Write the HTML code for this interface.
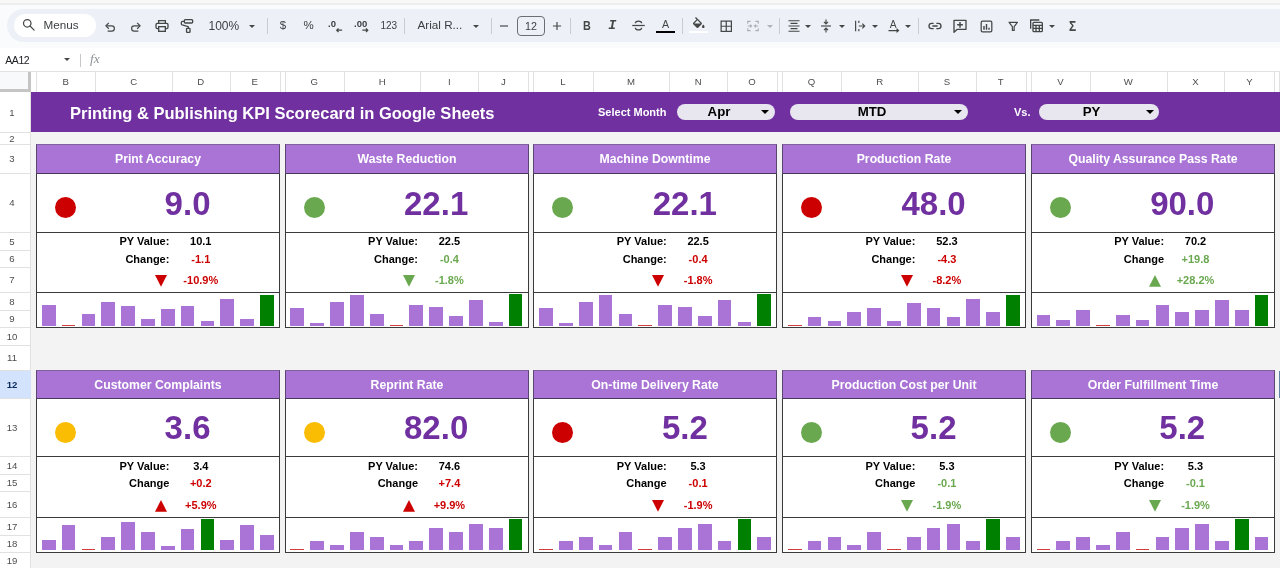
<!DOCTYPE html><html lang="en"><head><meta charset="utf-8"><title>Printing &amp; Publishing KPI Scorecard</title><style>
*{box-sizing:border-box}
html,body{margin:0;padding:0}
body{width:1280px;height:568px;overflow:hidden;position:relative;will-change:transform;background:#f3f3f3;font-family:"Liberation Sans",sans-serif;color:#000}
.a{position:absolute}
.tb{position:absolute;left:0;top:0;width:1280px;height:48px;background:#f9fbfd}
.strip{position:absolute;left:0;top:0;width:1280px;height:5px;background:#f8f8f6;border-bottom:2px solid #eeeeee}
.pill{position:absolute;left:7px;top:9px;width:1290px;height:33px;border-radius:16.5px;background:#edf1f7}
.menus{position:absolute;left:14px;top:14px;width:82px;height:23px;border-radius:11.5px;background:#fff}
.tt{position:absolute;font-size:12px;color:#3c4043;white-space:nowrap;line-height:14px}
.sep{position:absolute;width:1px;height:16px;top:17.5px;background:#c9ccd1}
.ic{position:absolute;overflow:visible}
.fb{position:absolute;left:0;top:48px;width:1280px;height:24px;background:#fff}
.ch{position:absolute;left:0;top:71px;width:1280px;height:21px;background:#fff;border-top:1px solid #e1e1e1}
.chl{position:absolute;top:72px;height:20px;line-height:19px;font-size:9.6px;color:#4d4d4d;text-align:center;transform:translateX(-50%)}
.cv{position:absolute;top:72px;width:1px;height:20px;background:#e1e1e1}
.rh{position:absolute;left:0;top:92px;width:31px;height:476px;background:#fff;border-right:1px solid #e1e1e1}
.rl{position:absolute;left:0;width:31px;height:1px;background:#e1e1e1}
.rn{position:absolute;left:0;width:24px;text-align:center;font-size:9.6px;color:#4d4d4d;height:12px;line-height:12px}
.banner{position:absolute;left:31px;top:91.5px;width:1249px;height:40.75px;background:#7030a0}
.title{position:absolute;left:70px;top:92.5px;height:40px;line-height:40px;color:#fff;font-weight:bold;font-size:16.5px;white-space:nowrap}
.lbl{position:absolute;color:#fff;font-weight:bold;font-size:11px;white-space:nowrap;line-height:14px}
.dd{position:absolute;top:104px;height:16px;border-radius:8px;background:#e8e6ef}
.ddt{position:absolute;top:104px;height:16px;line-height:16px;font-weight:bold;font-size:13.25px;transform:translateX(-50%);white-space:nowrap;color:#000}
.card{position:absolute;width:244px;background:#fff;border:1px solid #3a3a3a}
.hd{position:absolute;left:-1px;top:-1px;width:244px;background:#a974d6;border:1px solid #5a4670;border-top-color:#80609f;border-bottom-color:#473a58;color:#fff;font-weight:bold;font-size:12.25px;text-align:center;white-space:nowrap}
.hl{position:absolute;left:0;width:242px;height:1px;background:#3a3a3a}
.dot{position:absolute;width:21px;height:21px;border-radius:50%}
.big{position:absolute;font-weight:bold;font-size:33px;color:#7030a0;text-align:center;white-space:nowrap;line-height:36px;height:36px}
.k{position:absolute;font-weight:bold;font-size:11px;text-align:right;white-space:nowrap;height:14px;line-height:14px}
.v{position:absolute;font-weight:bold;font-size:11px;text-align:center;white-space:nowrap;height:14px;line-height:14px}
.tri{position:absolute;width:0;height:0;border-left:5.9px solid transparent;border-right:5.9px solid transparent}
.bar{position:absolute;background:#a974d6}
</style></head><body>
<div class="tb"><div class="strip"></div><div class="pill"></div><div class="menus"></div></div>
<div class="tt" style="left:43.5px;top:17.7px;font-size:11.7px">Menus</div>
<div class="tt" style="left:208.5px;top:19px">100%</div>
<div class="tt" style="left:279.7px;top:18px;font-size:11.5px">$</div>
<div class="tt" style="left:303.5px;top:18px;font-size:11.5px">%</div>
<div class="tt" style="left:328px;top:16.5px;font-size:9.5px;font-weight:bold">.0</div>
<div class="tt" style="left:354px;top:16.5px;font-size:9.5px;font-weight:bold">.00</div>
<div class="tt" style="left:380.5px;top:18.5px;font-size:10px">123</div>
<div class="tt" style="left:417.5px;top:17.8px;font-size:11.7px">Arial R...</div>
<div class="tt" style="left:525px;top:18.7px;font-size:10.7px">12</div>
<div class="a" style="left:517px;top:16px;width:28px;height:20px;border:1px solid #6b6f73;border-radius:4px"></div>
<div class="sep" style="left:267px"></div>
<div class="sep" style="left:404px"></div>
<div class="sep" style="left:491px"></div>
<div class="sep" style="left:570px"></div>
<div class="sep" style="left:682px"></div>
<div class="sep" style="left:779px"></div>
<div class="sep" style="left:918px"></div>
<svg class="ic" style="left:249.0px;top:24.8px" width="6" height="3" viewBox="0 0 6 3"><path d="M0 0H6L3.0 3Z" fill="#444746"/></svg>
<svg class="ic" style="left:472.5px;top:24.8px" width="6" height="3" viewBox="0 0 6 3"><path d="M0 0H6L3.0 3Z" fill="#444746"/></svg>
<svg class="ic" style="left:805.3px;top:24.8px" width="6" height="3" viewBox="0 0 6 3"><path d="M0 0H6L3.0 3Z" fill="#444746"/></svg>
<svg class="ic" style="left:838.6px;top:24.8px" width="6" height="3" viewBox="0 0 6 3"><path d="M0 0H6L3.0 3Z" fill="#444746"/></svg>
<svg class="ic" style="left:872.0px;top:24.8px" width="6" height="3" viewBox="0 0 6 3"><path d="M0 0H6L3.0 3Z" fill="#444746"/></svg>
<svg class="ic" style="left:905.0px;top:24.8px" width="6" height="3" viewBox="0 0 6 3"><path d="M0 0H6L3.0 3Z" fill="#444746"/></svg>
<svg class="ic" style="left:1049.0px;top:24.8px" width="6" height="3" viewBox="0 0 6 3"><path d="M0 0H6L3.0 3Z" fill="#444746"/></svg>
<svg class="ic" style="left:767.0px;top:24.8px" width="6" height="3" viewBox="0 0 6 3"><path d="M0 0H6L3.0 3Z" fill="#b0b3b6"/></svg>
<svg class="ic" style="left:20.8px;top:17.3px" width="15" height="15" viewBox="0 0 24 24" fill="none" stroke="#444746" stroke-width="2" ><circle cx="10" cy="10" r="6"/><path d="M14.5 14.5L21 21" stroke-linecap="round"/></svg>
<svg class="ic" style="left:103.3px;top:19.5px" width="14" height="14" viewBox="0 0 24 24" fill="none" stroke="#444746" stroke-width="2" ><path d="M8 19h7a4.5 4.5 0 0 0 0-9H6"/><path d="M10 5L5 10l5 5"/></svg>
<svg class="ic" style="left:128.8px;top:19.5px" width="14" height="14" viewBox="0 0 24 24" fill="none" stroke="#444746" stroke-width="2" ><path d="M16 19H9a4.5 4.5 0 0 1 0-9h9"/><path d="M14 5l5 5-5 5"/></svg>
<svg class="ic" style="left:153.5px;top:17.5px" width="16" height="16" viewBox="0 0 24 24" fill="none" stroke="#444746" stroke-width="2" ><path d="M7 8V4h10v4"/><rect x="3" y="8" width="18" height="8" rx="2"/><rect x="7" y="13" width="10" height="7" fill="#edf2fa"/></svg>
<svg class="ic" style="left:179.0px;top:17.5px" width="16" height="16" viewBox="0 0 24 24" fill="none" stroke="#444746" stroke-width="2" ><rect x="8" y="2.5" width="12.5" height="5" rx="1.5"/><path d="M8 5H5.5a2 2 0 0 0-2 2v1.5a2 2 0 0 0 1.4 1.9L13.9 13v2.5"/><rect x="11.3" y="15.5" width="5.2" height="6" rx="1"/></svg>
<svg class="ic" style="left:335.5px;top:28px" width="6.5" height="4.4" viewBox="0 0 9 6" fill="none" stroke="#444746" stroke-width="1.7"><path d="M8.5 3H1M3.5 0.5L1 3l2.5 2.5"/></svg>
<svg class="ic" style="left:361.5px;top:28px" width="6.5" height="4.4" viewBox="0 0 9 6" fill="none" stroke="#444746" stroke-width="1.7"><path d="M0.5 3H8M5.5 0.5L8 3 5.5 5.5"/></svg>
<svg class="ic" style="left:497.3px;top:18.5px" width="14" height="14" viewBox="0 0 24 24" fill="none" stroke="#444746" stroke-width="2" ><path d="M5 12h14" stroke-width="2"/></svg>
<svg class="ic" style="left:549.7px;top:18.5px" width="14" height="14" viewBox="0 0 24 24" fill="none" stroke="#444746" stroke-width="2" ><path d="M5 12h14M12 5v14" stroke-width="2"/></svg>
<div class="tt" style="left:582.5px;top:18.8px;font-size:12px;font-weight:bold;color:#444746;transform:scaleX(.9);transform-origin:0 0">B</div>
<div class="tt" style="left:608.3px;top:18.5px;font-size:13.5px;font-weight:bold;font-style:italic;color:#444746;font-family:'Liberation Mono',monospace">I</div>
<svg class="ic" style="left:630.8px;top:17.7px" width="15" height="15" viewBox="0 0 24 24" fill="none" stroke="#444746" stroke-width="2" ><path d="M2 12h20"/><path d="M17 8.5c0-2-2-3.5-5-3.5s-5 1.5-5 3.5"/><path d="M7 15.5c0 2 2 3.5 5 3.5s5-1.5 5-3.5"/></svg>
<div class="tt" style="left:662px;top:16.5px;font-size:10.7px;color:#444746">A</div>
<div class="a" style="left:656.3px;top:30.8px;width:18.5px;height:2.5px;background:#000"></div>
<svg class="ic" style="left:690.6px;top:17px" width="15.5" height="15.5" viewBox="0 0 24 24"><path fill="#444746" d="M16.56 8.94L7.62 0 6.21 1.41l2.38 2.38-5.15 5.15c-.59.59-.59 1.54 0 2.12l5.5 5.5c.29.29.68.44 1.06.440s.77-.15 1.06-.44l5.5-5.5c.59-.58.59-1.53 0-2.12zM5.21 10L10 5.21 14.79 10H5.21zM19 11.5s-2 2.17-2 3.5c0 1.1.9 2 2 2s2-.9 2-2c0-1.33-2-3.5-2-3.5z"/></svg>
<div class="a" style="left:689px;top:30.8px;width:19px;height:2.5px;background:#fff"></div>
<svg class="ic" style="left:718.95px;top:18.95px" width="14.5" height="14.5" viewBox="0 0 24 24" fill="none" stroke="#444746" stroke-width="2" ><rect x="3.5" y="3.5" width="17" height="17"/><path d="M12 3.5v17M3.5 12h17"/></svg>
<svg class="ic" style="left:746.1px;top:19.2px" width="14" height="14" viewBox="0 0 24 24" fill="none" stroke="#adb0b3" stroke-width="2"><path d="M3 8V4h5M16 4h5v4M21 16v4h-5M8 20H3v-4"/><path d="M3 12h6M7 9.5L9.5 12 7 14.5M21 12h-6M17 9.5L14.5 12l2.5 2.5"/></svg>
<svg class="ic" style="left:786.5px;top:19.4px" width="14" height="14" viewBox="0 0 24 24" fill="none" stroke="#444746" stroke-width="2" ><path d="M2.5 3h19M6 7.5h12M2.5 12h19M6 16.5h12M2.5 21h19" stroke-width="1.9"/></svg>
<svg class="ic" style="left:819.4px;top:19.3px" width="14" height="14" viewBox="0 0 24 24" fill="none" stroke="#444746" stroke-width="2" ><path d="M3.5 12h17"/><path d="M12 1v7M8.5 5l3.5 3.5L15.5 5M12 23v-7M8.5 19l3.5-3.5 3.5 3.5"/></svg>
<svg class="ic" style="left:853.2px;top:19.1px" width="14" height="14" viewBox="0 0 24 24" fill="none" stroke="#444746" stroke-width="2" ><path d="M4.5 3v18M10 3v4M10 17v4"/><path d="M10 12h10M16 8l4 4-4 4"/></svg>
<div class="tt" style="left:889.8px;top:18.2px;font-size:10.3px;color:#444746">A</div>
<svg class="ic" style="left:888.2px;top:27.5px" width="12" height="6" viewBox="0 0 12 6" fill="none" stroke="#444746" stroke-width="1.2"><path d="M0.5 2.6H10.5M8.5 0.8l2 1.8-2 1.8"/></svg>
<svg class="ic" style="left:926.5px;top:18.0px" width="16" height="16" viewBox="0 0 24 24" fill="none" stroke="#444746" stroke-width="2" ><path d="M10 8H7a4 4 0 0 0 0 8h3M14 8h3a4 4 0 0 1 0 8h-3M8 12h8"/></svg>
<svg class="ic" style="left:952.2px;top:17.7px" width="16" height="16" viewBox="0 0 24 24" fill="none" stroke="#444746" stroke-width="2" ><path d="M3 3.5h18v13.5H8l-5 4.5z" stroke-linejoin="round"/><path d="M12 6v8.5M7.7 10.2h8.6" stroke-width="2.2"/></svg>
<svg class="ic" style="left:979.0px;top:18.5px" width="15" height="15" viewBox="0 0 24 24" fill="none" stroke="#444746" stroke-width="2" ><rect x="3.5" y="3.5" width="17" height="17" rx="2"/><path d="M8 17v-6M12 17V8M16 17v-3" stroke-width="2.3"/></svg>
<svg class="ic" style="left:1006.55px;top:19.95px" width="12.5" height="12.5" viewBox="0 0 24 24" fill="none" stroke="#444746" stroke-width="2" ><path d="M4 4.5h16l-6.3 8v7.5h-3.4V12.5z" stroke-linejoin="round" stroke-width="2.3"/></svg>
<svg class="ic" style="left:1028.4px;top:18.3px" width="16" height="16" viewBox="0 0 24 24" fill="none" stroke="#444746" stroke-width="2" ><path d="M4 16V3h13"/><rect x="7.5" y="6.5" width="14" height="14" rx="1.5"/><path d="M7.5 11h14M12 11v9.5M17 11v9.5M7.5 15.5h14"/></svg>
<div class="tt" style="left:1068.6px;top:18.6px;font-size:14.5px;font-weight:bold;color:#444746;transform:scaleX(.82);transform-origin:0 0">Σ</div>
<div class="fb"></div>
<div class="tt" style="left:5.3px;top:52.7px;font-size:10.5px;letter-spacing:-0.45px;color:#202124">AA12</div>
<svg class="ic" style="left:64.0px;top:58.0px" width="6" height="3" viewBox="0 0 6 3"><path d="M0 0H6L3.0 3Z" fill="#444746"/></svg>
<div class="a" style="left:80px;top:54px;width:1px;height:13px;background:#c7c7c7"></div>
<div class="tt" style="left:90px;top:52.3px;font-size:13.5px;font-style:italic;color:#8f9398;font-family:'Liberation Serif',serif">fx</div>
<div class="ch"></div>
<div class="a" style="left:0;top:72px;width:31px;height:20px;background:#f8f9fa;border-right:3px solid #c4c4c4;border-bottom:3px solid #c4c4c4"></div>
<div class="cv" style="left:36px"></div>
<div class="chl" style="left:65.7px">B</div>
<div class="cv" style="left:95px"></div>
<div class="chl" style="left:133.6px">C</div>
<div class="cv" style="left:172px"></div>
<div class="chl" style="left:200.8px">D</div>
<div class="cv" style="left:230px"></div>
<div class="chl" style="left:254.8px">E</div>
<div class="cv" style="left:280px"></div>
<div class="cv" style="left:285px"></div>
<div class="chl" style="left:314.2px">G</div>
<div class="cv" style="left:344px"></div>
<div class="chl" style="left:382.2px">H</div>
<div class="cv" style="left:420px"></div>
<div class="chl" style="left:449.4px">I</div>
<div class="cv" style="left:478px"></div>
<div class="chl" style="left:503.4px">J</div>
<div class="cv" style="left:528px"></div>
<div class="cv" style="left:533px"></div>
<div class="chl" style="left:562.9px">L</div>
<div class="cv" style="left:593px"></div>
<div class="chl" style="left:630.9px">M</div>
<div class="cv" style="left:669px"></div>
<div class="chl" style="left:698.1px">N</div>
<div class="cv" style="left:727px"></div>
<div class="chl" style="left:752.1px">O</div>
<div class="cv" style="left:777px"></div>
<div class="cv" style="left:782px"></div>
<div class="chl" style="left:811.6px">Q</div>
<div class="cv" style="left:841px"></div>
<div class="chl" style="left:879.6px">R</div>
<div class="cv" style="left:918px"></div>
<div class="chl" style="left:946.9px">S</div>
<div class="cv" style="left:976px"></div>
<div class="chl" style="left:1000.8px">T</div>
<div class="cv" style="left:1026px"></div>
<div class="cv" style="left:1031px"></div>
<div class="chl" style="left:1060.4px">V</div>
<div class="cv" style="left:1090px"></div>
<div class="chl" style="left:1128.3px">W</div>
<div class="cv" style="left:1167px"></div>
<div class="chl" style="left:1195.5px">X</div>
<div class="cv" style="left:1224px"></div>
<div class="chl" style="left:1249.5px">Y</div>
<div class="cv" style="left:1274px"></div>
<div class="cv" style="left:1279px"></div>
<div class="rh"></div>
<div class="a" style="left:0;top:371px;width:31px;height:27px;background:#d3e3fd"></div>
<div class="rn" style="top:106.5px">1</div>
<div class="rl" style="top:132px"></div>
<div class="rn" style="top:132.5px">2</div>
<div class="rl" style="top:144px"></div>
<div class="rn" style="top:153.0px">3</div>
<div class="rl" style="top:173px"></div>
<div class="rn" style="top:197.0px">4</div>
<div class="rl" style="top:232px"></div>
<div class="rn" style="top:235.5px">5</div>
<div class="rl" style="top:250px"></div>
<div class="rn" style="top:253.0px">6</div>
<div class="rl" style="top:267px"></div>
<div class="rn" style="top:274.0px">7</div>
<div class="rl" style="top:292px"></div>
<div class="rn" style="top:295.5px">8</div>
<div class="rl" style="top:310px"></div>
<div class="rn" style="top:313.0px">9</div>
<div class="rl" style="top:327px"></div>
<div class="rn" style="top:330.5px">10</div>
<div class="rl" style="top:345px"></div>
<div class="rn" style="top:352.0px">11</div>
<div class="rl" style="top:370px"></div>
<div class="rn" style="top:378.5px;font-weight:bold;color:#0b2a5c">12</div>
<div class="rl" style="top:398px"></div>
<div class="rn" style="top:421.5px">13</div>
<div class="rl" style="top:456px"></div>
<div class="rn" style="top:459.5px">14</div>
<div class="rl" style="top:474px"></div>
<div class="rn" style="top:477.0px">15</div>
<div class="rl" style="top:491px"></div>
<div class="rn" style="top:498.5px">16</div>
<div class="rl" style="top:517px"></div>
<div class="rn" style="top:520.5px">17</div>
<div class="rl" style="top:535px"></div>
<div class="rn" style="top:538.0px">18</div>
<div class="rl" style="top:552px"></div>
<div class="rn" style="top:555.2px">19</div>
<div class="rl" style="top:570px"></div>
<div class="banner"></div>
<div class="title">Printing &amp; Publishing KPI Scorecard in Google Sheets</div>
<div class="lbl" style="left:598px;top:105px">Select Month</div>
<div class="lbl" style="left:1014px;top:105px">Vs.</div>
<div class="dd" style="left:677px;width:97.5px"></div>
<div class="ddt" style="left:719px">Apr</div>
<svg class="ic" style="left:760.5px;top:110.0px" width="8" height="4" viewBox="0 0 8 4"><path d="M0 0H8L4.0 4Z" fill="#000"/></svg>
<div class="dd" style="left:790px;width:178px"></div>
<div class="ddt" style="left:872px">MTD</div>
<svg class="ic" style="left:954.0px;top:110.0px" width="8" height="4" viewBox="0 0 8 4"><path d="M0 0H8L4.0 4Z" fill="#000"/></svg>
<div class="dd" style="left:1038.5px;width:120.5px"></div>
<div class="ddt" style="left:1091.5px">PY</div>
<svg class="ic" style="left:1145.5px;top:110.0px" width="8" height="4" viewBox="0 0 8 4"><path d="M0 0H8L4.0 4Z" fill="#000"/></svg>
<div class="card" style="left:36px;top:144px;height:184px">
<div class="hd" style="height:30px;line-height:29px">Print Accuracy</div>
<div class="hl" style="top:87px"></div>
<div class="hl" style="top:147px"></div>
<div class="dot" style="left:18px;top:52.0px;background:#cc0000"></div>
<div class="big" style="left:58.3px;width:184.5px;top:40.9px">9.0</div>
<div class="k" style="left:32.4px;width:100px;top:89.2px">PY Value:</div>
<div class="v" style="left:123.8px;width:80px;top:89.2px">10.1</div>
<div class="k" style="left:32.4px;width:100px;top:106.6px">Change:</div>
<div class="v" style="left:123.8px;width:80px;top:106.6px;color:#cc0000">-1.1</div>
<div class="v" style="left:123.8px;width:80px;top:128.4px;color:#cc0000">-10.9%</div>
<svg class="ic" style="left:117.75px;top:129.7px" width="12" height="11.7" viewBox="0 0 12 11.7"><polygon points="0,0 12,0 6.0,11.7" fill="#cc0000"/></svg>
<div class="bar" style="left:4.8px;width:13.8px;top:159.8px;height:20.9px;background:#a974d6"></div>
<div class="bar" style="left:24.6px;width:13.8px;top:180px;height:1px;background:#d23c3c"></div>
<div class="bar" style="left:44.5px;width:13.8px;top:168.5px;height:12.2px;background:#a974d6"></div>
<div class="bar" style="left:64.3px;width:13.8px;top:156.7px;height:24px;background:#a974d6"></div>
<div class="bar" style="left:84.2px;width:13.8px;top:161.0px;height:19.7px;background:#a974d6"></div>
<div class="bar" style="left:104.0px;width:13.8px;top:173.6px;height:7.1px;background:#a974d6"></div>
<div class="bar" style="left:123.8px;width:13.8px;top:163.8px;height:16.9px;background:#a974d6"></div>
<div class="bar" style="left:143.7px;width:13.8px;top:160.6px;height:20.1px;background:#a974d6"></div>
<div class="bar" style="left:163.5px;width:13.8px;top:175.6px;height:5.1px;background:#a974d6"></div>
<div class="bar" style="left:183.4px;width:13.8px;top:153.9px;height:26.8px;background:#a974d6"></div>
<div class="bar" style="left:203.2px;width:13.8px;top:174.2px;height:6.5px;background:#a974d6"></div>
<div class="bar" style="left:223.0px;width:13.8px;top:149.6px;height:31.1px;background:#008000"></div>
</div>
<div class="card" style="left:285px;top:144px;height:184px">
<div class="hd" style="height:30px;line-height:29px">Waste Reduction</div>
<div class="hl" style="top:87px"></div>
<div class="hl" style="top:147px"></div>
<div class="dot" style="left:18px;top:52.0px;background:#6aa84f"></div>
<div class="big" style="left:57.9px;width:184.5px;top:40.9px">22.1</div>
<div class="k" style="left:32.0px;width:100px;top:89.2px">PY Value:</div>
<div class="v" style="left:123.4px;width:80px;top:89.2px">22.5</div>
<div class="k" style="left:32.0px;width:100px;top:106.6px">Change:</div>
<div class="v" style="left:123.4px;width:80px;top:106.6px;color:#6aa84f">-0.4</div>
<div class="v" style="left:123.4px;width:80px;top:128.4px;color:#6aa84f">-1.8%</div>
<svg class="ic" style="left:117.35px;top:129.7px" width="12" height="11.7" viewBox="0 0 12 11.7"><polygon points="0,0 12,0 6.0,11.7" fill="#6aa84f"/></svg>
<div class="bar" style="left:4.4px;width:13.8px;top:163.2px;height:17.5px;background:#a974d6"></div>
<div class="bar" style="left:24.2px;width:13.8px;top:177.9px;height:2.8px;background:#a974d6"></div>
<div class="bar" style="left:44.1px;width:13.8px;top:156.7px;height:24px;background:#a974d6"></div>
<div class="bar" style="left:63.9px;width:13.8px;top:150.0px;height:30.7px;background:#a974d6"></div>
<div class="bar" style="left:83.8px;width:13.8px;top:168.9px;height:11.8px;background:#a974d6"></div>
<div class="bar" style="left:103.6px;width:13.8px;top:180px;height:1px;background:#d23c3c"></div>
<div class="bar" style="left:123.4px;width:13.8px;top:159.8px;height:20.9px;background:#a974d6"></div>
<div class="bar" style="left:143.3px;width:13.8px;top:161.8px;height:18.9px;background:#a974d6"></div>
<div class="bar" style="left:163.1px;width:13.8px;top:170.7px;height:10px;background:#a974d6"></div>
<div class="bar" style="left:183.0px;width:13.8px;top:155.3px;height:25.4px;background:#a974d6"></div>
<div class="bar" style="left:202.8px;width:13.8px;top:176.7px;height:4px;background:#a974d6"></div>
<div class="bar" style="left:222.6px;width:13.8px;top:149.4px;height:31.3px;background:#008000"></div>
</div>
<div class="card" style="left:533px;top:144px;height:184px">
<div class="hd" style="height:30px;line-height:29px">Machine Downtime</div>
<div class="hl" style="top:87px"></div>
<div class="hl" style="top:147px"></div>
<div class="dot" style="left:18px;top:52.0px;background:#6aa84f"></div>
<div class="big" style="left:58.6px;width:184.5px;top:40.9px">22.1</div>
<div class="k" style="left:32.7px;width:100px;top:89.2px">PY Value:</div>
<div class="v" style="left:124.1px;width:80px;top:89.2px">22.5</div>
<div class="k" style="left:32.7px;width:100px;top:106.6px">Change:</div>
<div class="v" style="left:124.1px;width:80px;top:106.6px;color:#cc0000">-0.4</div>
<div class="v" style="left:124.1px;width:80px;top:128.4px;color:#cc0000">-1.8%</div>
<svg class="ic" style="left:118.05px;top:129.7px" width="12" height="11.7" viewBox="0 0 12 11.7"><polygon points="0,0 12,0 6.0,11.7" fill="#cc0000"/></svg>
<div class="bar" style="left:5.1px;width:13.8px;top:163.2px;height:17.5px;background:#a974d6"></div>
<div class="bar" style="left:24.9px;width:13.8px;top:177.9px;height:2.8px;background:#a974d6"></div>
<div class="bar" style="left:44.8px;width:13.8px;top:156.7px;height:24px;background:#a974d6"></div>
<div class="bar" style="left:64.6px;width:13.8px;top:150.0px;height:30.7px;background:#a974d6"></div>
<div class="bar" style="left:84.5px;width:13.8px;top:168.9px;height:11.8px;background:#a974d6"></div>
<div class="bar" style="left:104.3px;width:13.8px;top:180px;height:1px;background:#d23c3c"></div>
<div class="bar" style="left:124.1px;width:13.8px;top:159.8px;height:20.9px;background:#a974d6"></div>
<div class="bar" style="left:144.0px;width:13.8px;top:161.8px;height:18.9px;background:#a974d6"></div>
<div class="bar" style="left:163.8px;width:13.8px;top:170.7px;height:10px;background:#a974d6"></div>
<div class="bar" style="left:183.7px;width:13.8px;top:155.3px;height:25.4px;background:#a974d6"></div>
<div class="bar" style="left:203.5px;width:13.8px;top:176.7px;height:4px;background:#a974d6"></div>
<div class="bar" style="left:223.3px;width:13.8px;top:149.4px;height:31.3px;background:#008000"></div>
</div>
<div class="card" style="left:782px;top:144px;height:184px">
<div class="hd" style="height:30px;line-height:29px">Production Rate</div>
<div class="hl" style="top:87px"></div>
<div class="hl" style="top:147px"></div>
<div class="dot" style="left:18px;top:52.0px;background:#cc0000"></div>
<div class="big" style="left:58.3px;width:184.5px;top:40.9px">48.0</div>
<div class="k" style="left:32.4px;width:100px;top:89.2px">PY Value:</div>
<div class="v" style="left:123.9px;width:80px;top:89.2px">52.3</div>
<div class="k" style="left:32.4px;width:100px;top:106.6px">Change:</div>
<div class="v" style="left:123.9px;width:80px;top:106.6px;color:#cc0000">-4.3</div>
<div class="v" style="left:123.9px;width:80px;top:128.4px;color:#cc0000">-8.2%</div>
<svg class="ic" style="left:117.75px;top:129.7px" width="12" height="11.7" viewBox="0 0 12 11.7"><polygon points="0,0 12,0 6.0,11.7" fill="#cc0000"/></svg>
<div class="bar" style="left:4.8px;width:13.8px;top:180px;height:1px;background:#d23c3c"></div>
<div class="bar" style="left:24.6px;width:13.8px;top:171.6px;height:9.1px;background:#a974d6"></div>
<div class="bar" style="left:44.5px;width:13.8px;top:175.8px;height:4.9px;background:#a974d6"></div>
<div class="bar" style="left:64.3px;width:13.8px;top:166.9px;height:13.8px;background:#a974d6"></div>
<div class="bar" style="left:84.2px;width:13.8px;top:162.6px;height:18.1px;background:#a974d6"></div>
<div class="bar" style="left:104.0px;width:13.8px;top:175.8px;height:4.9px;background:#a974d6"></div>
<div class="bar" style="left:123.8px;width:13.8px;top:158.2px;height:22.5px;background:#a974d6"></div>
<div class="bar" style="left:143.7px;width:13.8px;top:162.6px;height:18.1px;background:#a974d6"></div>
<div class="bar" style="left:163.5px;width:13.8px;top:171.6px;height:9.1px;background:#a974d6"></div>
<div class="bar" style="left:183.4px;width:13.8px;top:153.9px;height:26.8px;background:#a974d6"></div>
<div class="bar" style="left:203.2px;width:13.8px;top:166.9px;height:13.8px;background:#a974d6"></div>
<div class="bar" style="left:223.0px;width:13.8px;top:149.6px;height:31.1px;background:#008000"></div>
</div>
<div class="card" style="left:1031px;top:144px;height:184px">
<div class="hd" style="height:30px;line-height:29px">Quality Assurance Pass Rate</div>
<div class="hl" style="top:87px"></div>
<div class="hl" style="top:147px"></div>
<div class="dot" style="left:18px;top:52.0px;background:#6aa84f"></div>
<div class="big" style="left:58.0px;width:184.5px;top:40.9px">90.0</div>
<div class="k" style="left:32.1px;width:100px;top:89.2px">PY Value:</div>
<div class="v" style="left:123.5px;width:80px;top:89.2px">70.2</div>
<div class="k" style="left:32.1px;width:100px;top:106.6px">Change</div>
<div class="v" style="left:123.5px;width:80px;top:106.6px;color:#6aa84f">+19.8</div>
<div class="v" style="left:123.5px;width:80px;top:128.4px;color:#6aa84f">+28.2%</div>
<svg class="ic" style="left:117.45px;top:129.7px" width="12" height="11.7" viewBox="0 0 12 11.7"><polygon points="0,11.7 12,11.7 6.0,0" fill="#6aa84f"/></svg>
<div class="bar" style="left:4.5px;width:13.8px;top:169.9px;height:10.8px;background:#a974d6"></div>
<div class="bar" style="left:24.3px;width:13.8px;top:175.0px;height:5.7px;background:#a974d6"></div>
<div class="bar" style="left:44.2px;width:13.8px;top:164.9px;height:15.8px;background:#a974d6"></div>
<div class="bar" style="left:64.0px;width:13.8px;top:180px;height:1px;background:#d23c3c"></div>
<div class="bar" style="left:83.9px;width:13.8px;top:169.9px;height:10.8px;background:#a974d6"></div>
<div class="bar" style="left:103.7px;width:13.8px;top:175.0px;height:5.7px;background:#a974d6"></div>
<div class="bar" style="left:123.5px;width:13.8px;top:159.8px;height:20.9px;background:#a974d6"></div>
<div class="bar" style="left:143.4px;width:13.8px;top:166.9px;height:13.8px;background:#a974d6"></div>
<div class="bar" style="left:163.2px;width:13.8px;top:164.9px;height:15.8px;background:#a974d6"></div>
<div class="bar" style="left:183.1px;width:13.8px;top:154.7px;height:26px;background:#a974d6"></div>
<div class="bar" style="left:202.9px;width:13.8px;top:164.9px;height:15.8px;background:#a974d6"></div>
<div class="bar" style="left:222.7px;width:13.8px;top:149.6px;height:31.1px;background:#008000"></div>
</div>
<div class="card" style="left:36px;top:370px;height:183px">
<div class="hd" style="height:29px;line-height:28px">Customer Complaints</div>
<div class="hl" style="top:85px"></div>
<div class="hl" style="top:146px"></div>
<div class="dot" style="left:18px;top:50.5px;background:#fbbc04"></div>
<div class="big" style="left:58.3px;width:184.5px;top:39.4px">3.6</div>
<div class="k" style="left:32.4px;width:100px;top:87.6px">PY Value:</div>
<div class="v" style="left:123.8px;width:80px;top:87.6px">3.4</div>
<div class="k" style="left:32.4px;width:100px;top:105.0px">Change</div>
<div class="v" style="left:123.8px;width:80px;top:105.0px;color:#cc0000">+0.2</div>
<div class="v" style="left:123.8px;width:80px;top:127.2px;color:#cc0000">+5.9%</div>
<svg class="ic" style="left:117.75px;top:128.8px" width="12" height="11.7" viewBox="0 0 12 11.7"><polygon points="0,11.7 12,11.7 6.0,0" fill="#cc0000"/></svg>
<div class="bar" style="left:4.8px;width:13.8px;top:169.2px;height:10px;background:#a974d6"></div>
<div class="bar" style="left:24.6px;width:13.8px;top:154.0px;height:25.2px;background:#a974d6"></div>
<div class="bar" style="left:44.5px;width:13.8px;top:178px;height:1px;background:#d23c3c"></div>
<div class="bar" style="left:64.3px;width:13.8px;top:166.4px;height:12.8px;background:#a974d6"></div>
<div class="bar" style="left:84.2px;width:13.8px;top:151.0px;height:28.2px;background:#a974d6"></div>
<div class="bar" style="left:104.0px;width:13.8px;top:160.7px;height:18.5px;background:#a974d6"></div>
<div class="bar" style="left:123.8px;width:13.8px;top:175.2px;height:4px;background:#a974d6"></div>
<div class="bar" style="left:143.7px;width:13.8px;top:157.7px;height:21.5px;background:#a974d6"></div>
<div class="bar" style="left:163.5px;width:13.8px;top:148.1px;height:31.1px;background:#008000"></div>
<div class="bar" style="left:183.4px;width:13.8px;top:169.4px;height:9.8px;background:#a974d6"></div>
<div class="bar" style="left:203.2px;width:13.8px;top:154.0px;height:25.2px;background:#a974d6"></div>
<div class="bar" style="left:223.0px;width:13.8px;top:163.6px;height:15.6px;background:#a974d6"></div>
</div>
<div class="card" style="left:285px;top:370px;height:183px">
<div class="hd" style="height:29px;line-height:28px">Reprint Rate</div>
<div class="hl" style="top:85px"></div>
<div class="hl" style="top:146px"></div>
<div class="dot" style="left:18px;top:50.5px;background:#fbbc04"></div>
<div class="big" style="left:57.9px;width:184.5px;top:39.4px">82.0</div>
<div class="k" style="left:32.0px;width:100px;top:87.6px">PY Value:</div>
<div class="v" style="left:123.4px;width:80px;top:87.6px">74.6</div>
<div class="k" style="left:32.0px;width:100px;top:105.0px">Change</div>
<div class="v" style="left:123.4px;width:80px;top:105.0px;color:#cc0000">+7.4</div>
<div class="v" style="left:123.4px;width:80px;top:127.2px;color:#cc0000">+9.9%</div>
<svg class="ic" style="left:117.35px;top:128.8px" width="12" height="11.7" viewBox="0 0 12 11.7"><polygon points="0,11.7 12,11.7 6.0,0" fill="#cc0000"/></svg>
<div class="bar" style="left:4.4px;width:13.8px;top:178px;height:1px;background:#d23c3c"></div>
<div class="bar" style="left:24.2px;width:13.8px;top:170.1px;height:9.1px;background:#a974d6"></div>
<div class="bar" style="left:44.1px;width:13.8px;top:174.3px;height:4.9px;background:#a974d6"></div>
<div class="bar" style="left:63.9px;width:13.8px;top:161.1px;height:18.1px;background:#a974d6"></div>
<div class="bar" style="left:83.8px;width:13.8px;top:165.6px;height:13.6px;background:#a974d6"></div>
<div class="bar" style="left:103.6px;width:13.8px;top:174.3px;height:4.9px;background:#a974d6"></div>
<div class="bar" style="left:123.4px;width:13.8px;top:170.1px;height:9.1px;background:#a974d6"></div>
<div class="bar" style="left:143.3px;width:13.8px;top:156.9px;height:22.3px;background:#a974d6"></div>
<div class="bar" style="left:163.1px;width:13.8px;top:161.1px;height:18.1px;background:#a974d6"></div>
<div class="bar" style="left:183.0px;width:13.8px;top:152.6px;height:26.6px;background:#a974d6"></div>
<div class="bar" style="left:202.8px;width:13.8px;top:156.9px;height:22.3px;background:#a974d6"></div>
<div class="bar" style="left:222.6px;width:13.8px;top:148.1px;height:31.1px;background:#008000"></div>
</div>
<div class="card" style="left:533px;top:370px;height:183px">
<div class="hd" style="height:29px;line-height:28px">On-time Delivery Rate</div>
<div class="hl" style="top:85px"></div>
<div class="hl" style="top:146px"></div>
<div class="dot" style="left:18px;top:50.5px;background:#cc0000"></div>
<div class="big" style="left:58.6px;width:184.5px;top:39.4px">5.2</div>
<div class="k" style="left:32.7px;width:100px;top:87.6px">PY Value:</div>
<div class="v" style="left:124.1px;width:80px;top:87.6px">5.3</div>
<div class="k" style="left:32.7px;width:100px;top:105.0px">Change</div>
<div class="v" style="left:124.1px;width:80px;top:105.0px;color:#cc0000">-0.1</div>
<div class="v" style="left:124.1px;width:80px;top:127.2px;color:#cc0000">-1.9%</div>
<svg class="ic" style="left:118.05px;top:128.8px" width="12" height="11.7" viewBox="0 0 12 11.7"><polygon points="0,0 12,0 6.0,11.7" fill="#cc0000"/></svg>
<div class="bar" style="left:5.1px;width:13.8px;top:178px;height:1px;background:#d23c3c"></div>
<div class="bar" style="left:24.9px;width:13.8px;top:170.1px;height:9.1px;background:#a974d6"></div>
<div class="bar" style="left:44.8px;width:13.8px;top:165.6px;height:13.6px;background:#a974d6"></div>
<div class="bar" style="left:64.6px;width:13.8px;top:174.3px;height:4.9px;background:#a974d6"></div>
<div class="bar" style="left:84.5px;width:13.8px;top:161.1px;height:18.1px;background:#a974d6"></div>
<div class="bar" style="left:104.3px;width:13.8px;top:178px;height:1px;background:#d23c3c"></div>
<div class="bar" style="left:124.1px;width:13.8px;top:165.6px;height:13.6px;background:#a974d6"></div>
<div class="bar" style="left:144.0px;width:13.8px;top:156.9px;height:22.3px;background:#a974d6"></div>
<div class="bar" style="left:163.8px;width:13.8px;top:152.6px;height:26.6px;background:#a974d6"></div>
<div class="bar" style="left:183.7px;width:13.8px;top:170.1px;height:9.1px;background:#a974d6"></div>
<div class="bar" style="left:203.5px;width:13.8px;top:148.1px;height:31.1px;background:#008000"></div>
<div class="bar" style="left:223.3px;width:13.8px;top:165.6px;height:13.6px;background:#a974d6"></div>
</div>
<div class="card" style="left:782px;top:370px;height:183px">
<div class="hd" style="height:29px;line-height:28px">Production Cost per Unit</div>
<div class="hl" style="top:85px"></div>
<div class="hl" style="top:146px"></div>
<div class="dot" style="left:18px;top:50.5px;background:#6aa84f"></div>
<div class="big" style="left:58.3px;width:184.5px;top:39.4px">5.2</div>
<div class="k" style="left:32.4px;width:100px;top:87.6px">PY Value:</div>
<div class="v" style="left:123.9px;width:80px;top:87.6px">5.3</div>
<div class="k" style="left:32.4px;width:100px;top:105.0px">Change</div>
<div class="v" style="left:123.9px;width:80px;top:105.0px;color:#6aa84f">-0.1</div>
<div class="v" style="left:123.9px;width:80px;top:127.2px;color:#6aa84f">-1.9%</div>
<svg class="ic" style="left:117.75px;top:128.8px" width="12" height="11.7" viewBox="0 0 12 11.7"><polygon points="0,0 12,0 6.0,11.7" fill="#6aa84f"/></svg>
<div class="bar" style="left:4.8px;width:13.8px;top:178px;height:1px;background:#d23c3c"></div>
<div class="bar" style="left:24.6px;width:13.8px;top:170.1px;height:9.1px;background:#a974d6"></div>
<div class="bar" style="left:44.5px;width:13.8px;top:165.6px;height:13.6px;background:#a974d6"></div>
<div class="bar" style="left:64.3px;width:13.8px;top:174.3px;height:4.9px;background:#a974d6"></div>
<div class="bar" style="left:84.2px;width:13.8px;top:161.1px;height:18.1px;background:#a974d6"></div>
<div class="bar" style="left:104.0px;width:13.8px;top:178px;height:1px;background:#d23c3c"></div>
<div class="bar" style="left:123.8px;width:13.8px;top:165.6px;height:13.6px;background:#a974d6"></div>
<div class="bar" style="left:143.7px;width:13.8px;top:156.9px;height:22.3px;background:#a974d6"></div>
<div class="bar" style="left:163.5px;width:13.8px;top:152.6px;height:26.6px;background:#a974d6"></div>
<div class="bar" style="left:183.4px;width:13.8px;top:170.1px;height:9.1px;background:#a974d6"></div>
<div class="bar" style="left:203.2px;width:13.8px;top:148.1px;height:31.1px;background:#008000"></div>
<div class="bar" style="left:223.0px;width:13.8px;top:165.6px;height:13.6px;background:#a974d6"></div>
</div>
<div class="card" style="left:1031px;top:370px;height:183px">
<div class="hd" style="height:29px;line-height:28px">Order Fulfillment Time</div>
<div class="hl" style="top:85px"></div>
<div class="hl" style="top:146px"></div>
<div class="dot" style="left:18px;top:50.5px;background:#6aa84f"></div>
<div class="big" style="left:58.0px;width:184.5px;top:39.4px">5.2</div>
<div class="k" style="left:32.1px;width:100px;top:87.6px">PY Value:</div>
<div class="v" style="left:123.5px;width:80px;top:87.6px">5.3</div>
<div class="k" style="left:32.1px;width:100px;top:105.0px">Change</div>
<div class="v" style="left:123.5px;width:80px;top:105.0px;color:#6aa84f">-0.1</div>
<div class="v" style="left:123.5px;width:80px;top:127.2px;color:#6aa84f">-1.9%</div>
<svg class="ic" style="left:117.45px;top:128.8px" width="12" height="11.7" viewBox="0 0 12 11.7"><polygon points="0,0 12,0 6.0,11.7" fill="#6aa84f"/></svg>
<div class="bar" style="left:4.5px;width:13.8px;top:178px;height:1px;background:#d23c3c"></div>
<div class="bar" style="left:24.3px;width:13.8px;top:170.1px;height:9.1px;background:#a974d6"></div>
<div class="bar" style="left:44.2px;width:13.8px;top:165.6px;height:13.6px;background:#a974d6"></div>
<div class="bar" style="left:64.0px;width:13.8px;top:174.3px;height:4.9px;background:#a974d6"></div>
<div class="bar" style="left:83.9px;width:13.8px;top:161.1px;height:18.1px;background:#a974d6"></div>
<div class="bar" style="left:103.7px;width:13.8px;top:178px;height:1px;background:#d23c3c"></div>
<div class="bar" style="left:123.5px;width:13.8px;top:165.6px;height:13.6px;background:#a974d6"></div>
<div class="bar" style="left:143.4px;width:13.8px;top:156.9px;height:22.3px;background:#a974d6"></div>
<div class="bar" style="left:163.2px;width:13.8px;top:152.6px;height:26.6px;background:#a974d6"></div>
<div class="bar" style="left:183.1px;width:13.8px;top:170.1px;height:9.1px;background:#a974d6"></div>
<div class="bar" style="left:202.9px;width:13.8px;top:148.1px;height:31.1px;background:#008000"></div>
<div class="bar" style="left:222.7px;width:13.8px;top:165.6px;height:13.6px;background:#a974d6"></div>
</div>
<div class="a" style="left:1279px;top:371px;width:1px;height:27px;background:#5f7fa6"></div>
</body></html>
